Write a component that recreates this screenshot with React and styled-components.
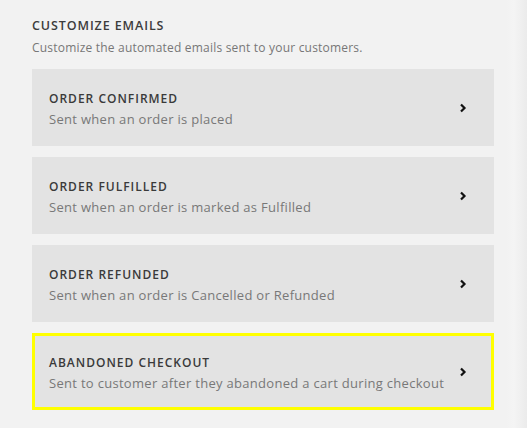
import React from "react";
import styled, { createGlobalStyle } from "styled-components";

const Global = createGlobalStyle`
  html, body { margin: 0; padding: 0; }
  body {
    background: linear-gradient(to right, #f2f2f2 0, #f2f2f2 506px, #f4f4f4 514px, #ebebeb 527px);
    font-family: "Open Sans", Lato, Arial, sans-serif;
    -webkit-font-smoothing: antialiased;
  }
`;

const Page = styled.div`
  width: 527px;
  height: 428px;
  box-sizing: border-box;
  padding: 18px 33px 0 32px;
  overflow: hidden;
`;

const Heading = styled.h2`
  margin: 0;
  font-size: 12.5px;
  font-weight: 600;
  letter-spacing: 0.9px;
  color: #3c3c3c;
  line-height: 16px;
`;

const Sub = styled.p`
  margin: 7px 0 14px;
  font-size: 12px;
  letter-spacing: 0.2px;
  color: #777;
  line-height: 14px;
`;

const List = styled.div`
  display: flex;
  flex-direction: column;
  gap: 11px;
`;

const Card = styled.div`
  box-sizing: border-box;
  height: 77px;
  background: #e3e3e3;
  border: 3px solid ${(p) => (p.$highlight ? "#ffff00" : "transparent")};
  padding: 0 24px 0 14px;
  display: flex;
  align-items: center;
  justify-content: space-between;
`;

const Texts = styled.div`
  display: flex;
  flex-direction: column;
  gap: 5px;
  padding-top: 2px;
`;

const Title = styled.div`
  font-size: 12px;
  font-weight: 600;
  letter-spacing: 1px;
  color: #3a3a3a;
  line-height: 15px;
`;

const Desc = styled.div`
  font-size: 13px;
  letter-spacing: 0.3px;
  color: #787878;
  line-height: 16px;
`;

const Chevron = () => (
  <svg width="8" height="10" viewBox="0 0 8 10">
    <path d="M2 1.5 L5.5 5 L2 8.5" fill="none" stroke="#111" strokeWidth="2.2" />
  </svg>
);

const items = [
  ["ORDER CONFIRMED", "Sent when an order is placed"],
  ["ORDER FULFILLED", "Sent when an order is marked as Fulfilled"],
  ["ORDER REFUNDED", "Sent when an order is Cancelled or Refunded"],
  ["ABANDONED CHECKOUT", "Sent to customer after they abandoned a cart during checkout", true],
];

export default function App() {
  return (
    <>
      <Global />
      <Page>
        <Heading>CUSTOMIZE EMAILS</Heading>
        <Sub>Customize the automated emails sent to your customers.</Sub>
        <List>
          {items.map(([t, d, h]) => (
            <Card key={t} $highlight={h}>
              <Texts>
                <Title>{t}</Title>
                <Desc>{d}</Desc>
              </Texts>
              <Chevron />
            </Card>
          ))}
        </List>
      </Page>
    </>
  );
}
